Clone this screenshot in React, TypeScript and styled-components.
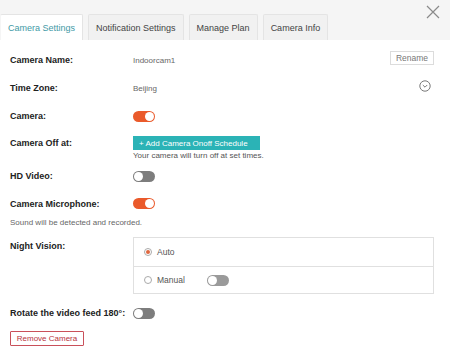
import styled, { createGlobalStyle } from "styled-components";

const Global = createGlobalStyle`
  html, body { margin: 0; padding: 0; background: #fff; }
  body { font-family: "Liberation Sans", Arial, sans-serif; }
  * { box-sizing: border-box; }
`;

export default function App() {
  return (
    <Page>
      <Global />
      <Header>
        <Tabs>
          <Tab $active>Camera Settings</Tab>
          <Tab>Notification Settings</Tab>
          <Tab>Manage Plan</Tab>
          <Tab>Camera Info</Tab>
        </Tabs>
        <Close aria-label="close">
          <svg width="14" height="14" viewBox="0 0 14 14">
            <path d="M1 1L13 13M13 1L1 13" stroke="#8a8a8a" strokeWidth="1.2" fill="none" />
          </svg>
        </Close>
      </Header>

      <Body>
        <Row>
          <Label>Camera Name:</Label>
          <Value>Indoorcam1</Value>
          <GhostButton>Rename</GhostButton>
        </Row>
        <Row>
          <Label>Time Zone:</Label>
          <Value>Beijing</Value>
          <Chevron>
            <svg width="12" height="12" viewBox="0 0 12 12">
              <circle cx="6" cy="6" r="5.2" stroke="#6a6a6a" strokeWidth="0.9" fill="none" />
              <path d="M3.8 5L6 7.2L8.2 5" stroke="#6a6a6a" strokeWidth="0.9" fill="none" />
            </svg>
          </Chevron>
        </Row>
        <Row>
          <Label>Camera:</Label>
          <Toggle $on />
        </Row>
        <TopRow>
          <Label>Camera Off at:</Label>
          <Stack>
            <PrimaryButton>+ Add Camera Onoff Schedule</PrimaryButton>
            <Caption>Your camera will turn off at set times.</Caption>
          </Stack>
        </TopRow>
        <Row>
          <Label>HD Video:</Label>
          <Toggle />
        </Row>
        <Row $h={27}>
          <Label>Camera Microphone:</Label>
          <Toggle $on />
        </Row>
        <Note>Sound will be detected and recorded.</Note>
        <NightRow>
          <Label>Night Vision:</Label>
          <OptionBox>
            <Option>
              <Radio $checked />
              <OptionText>Auto</OptionText>
            </Option>
            <Option>
              <Radio />
              <OptionText $w={50}>Manual</OptionText>
              <Toggle $light />
            </Option>
          </OptionBox>
        </NightRow>
        <Row $h={28} $mt={5}>
          <Label>Rotate the video feed 180°:</Label>
          <Toggle />
        </Row>
        <DangerButton>Remove Camera</DangerButton>
      </Body>
    </Page>
  );
}

const Page = styled.div`
  width: 450px;
  height: 349px;
  overflow: hidden;
  background: #fff;
`;

const Header = styled.div`
  height: 40px;
  background: #f5f5f5;
  display: flex;
  align-items: flex-end;
`;

const Tabs = styled.div`
  display: flex;
  gap: 5px;
`;

const Tab = styled.div<{ $active?: boolean }>`
  height: 26px;
  padding: 0 7px;
  display: flex;
  align-items: center;
  font-size: 9px;
  color: ${(p) => (p.$active ? "#3f9aa6" : "#444")};
  background: ${(p) => (p.$active ? "#fff" : "#f1f1f1")};
  border: 1px solid #e4e4e4;
  border-bottom: none;
  border-left-color: ${(p) => (p.$active ? "#f5f5f5" : "#e4e4e4")};
  border-radius: 2px 2px 0 0;
`;

const Close = styled.div`
  margin-left: auto;
  align-self: flex-start;
  margin-top: 5px;
  margin-right: 10px;
  width: 14px;
  height: 14px;
  display: flex;
`;

const Body = styled.div`
  padding: 6px 16px 0 10px;
`;

const Row = styled.div<{ $h?: number; $mt?: number }>`
  display: flex;
  align-items: center;
  height: ${(p) => p.$h ?? 28}px;
  margin-top: ${(p) => p.$mt ?? 0}px;
`;

const TopRow = styled.div`
  display: flex;
  align-items: flex-start;
  padding-top: 6px;
  height: 32px;
`;

const NightRow = styled.div`
  display: flex;
  align-items: flex-start;
  margin-top: 8px;
`;

const Label = styled.div`
  width: 123px;
  flex-shrink: 0;
  font-size: 9px;
  font-weight: bold;
  line-height: 14px;
  color: #222;
  white-space: nowrap;
  ${NightRow} & {
    margin-top: 2px;
  }
`;

const Value = styled.div`
  font-size: 8px;
  color: #666;
`;

const GhostButton = styled.div`
  margin-left: auto;
  width: 44px;
  height: 14px;
  border: 1px solid #dcdcdc;
  font-size: 8.5px;
  color: #777;
  display: flex;
  align-items: center;
  justify-content: center;
  margin-top: -4px;
`;

const Chevron = styled.div`
  margin-left: auto;
  margin-right: 3px;
  margin-top: -4px;
  display: flex;
`;

const Stack = styled.div`
  display: flex;
  flex-direction: column;
`;

const PrimaryButton = styled.div`
  width: 127px;
  height: 14px;
  background: #2bb3b6;
  color: #fff;
  font-size: 8px;
  display: flex;
  align-items: center;
  padding-left: 6px;
`;

const Caption = styled.div`
  font-size: 8px;
  line-height: 11px;
  color: #555;
`;

const Note = styled.div`
  font-size: 8px;
  line-height: 12px;
  color: #666;
`;

const Toggle = styled.div<{ $on?: boolean; $light?: boolean }>`
  position: relative;
  width: 22px;
  height: 11px;
  border-radius: 6px;
  background: ${(p) => (p.$on ? "#ea5a2b" : p.$light ? "#9a9a9a" : "#7d7d7d")};
  flex-shrink: 0;
  &::after {
    content: "";
    position: absolute;
    top: 1px;
    left: ${(p) => (p.$on ? "12px" : "1px")};
    width: 9px;
    height: 9px;
    border-radius: 50%;
    background: #fff;
  }
`;

const OptionBox = styled.div`
  width: 301px;
  border: 1px solid #e0e0e0;
`;

const Option = styled.div`
  height: 28px;
  display: flex;
  align-items: center;
  padding-left: 10px;
  & + & {
    border-top: 1px solid #e0e0e0;
    height: 27px;
  }
`;

const Radio = styled.div<{ $checked?: boolean }>`
  width: 8px;
  height: 8px;
  border-radius: 50%;
  border: 1px solid #aaa;
  display: flex;
  align-items: center;
  justify-content: center;
  margin-right: 5px;
  &::after {
    content: "";
    width: 4px;
    height: 4px;
    border-radius: 50%;
    background: ${(p) => (p.$checked ? "#e0673f" : "transparent")};
  }
`;

const OptionText = styled.div<{ $w?: number }>`
  font-size: 8.5px;
  color: #555;
  width: ${(p) => (p.$w ? `${p.$w}px` : "auto")};
`;

const DangerButton = styled.div`
  margin-top: 4px;
  width: 74px;
  height: 15px;
  border: 1px solid #c9505a;
  border-radius: 1px;
  color: #b8323d;
  font-size: 8px;
  display: flex;
  align-items: center;
  justify-content: center;
`;
